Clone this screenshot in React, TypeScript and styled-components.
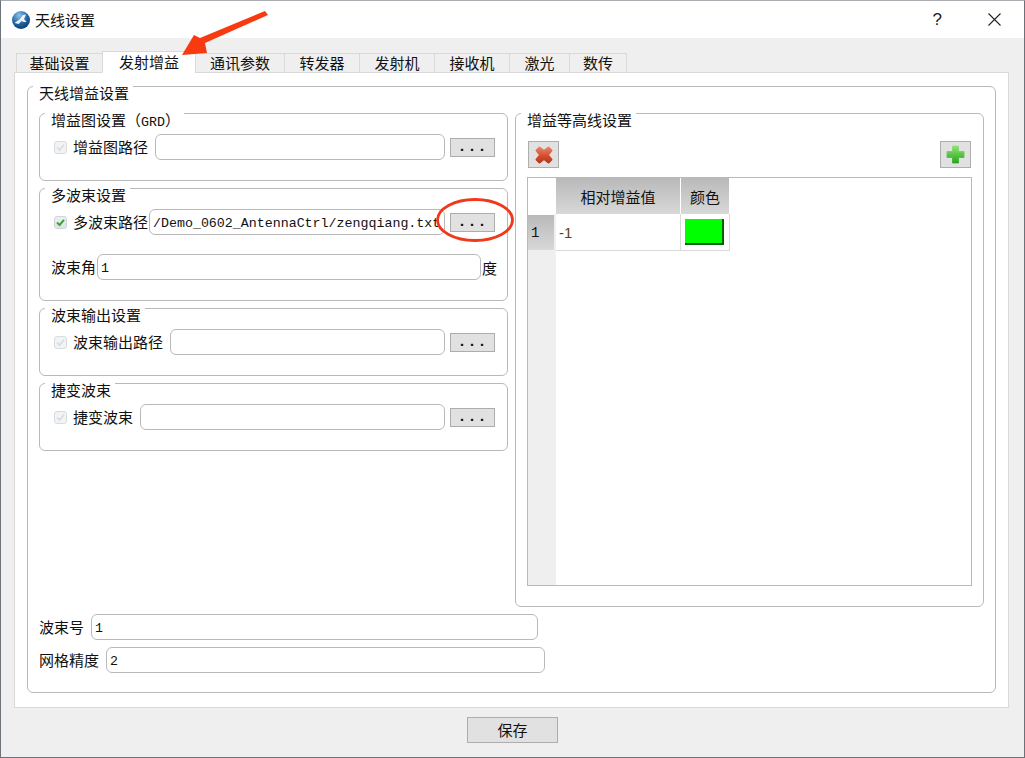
import React from "react";
import styled, { createGlobalStyle } from "styled-components";

const Global = createGlobalStyle`
  html, body { margin: 0; padding: 0; background: #efefef; }
  * { box-sizing: border-box; }
  body { font-family: "Noto Sans CJK SC", "Liberation Sans", sans-serif; font-size: 15px; color: #111; }
`;
const Win = styled.div`
  position: relative; width: 1025px; height: 758px; display: flex; flex-direction: column;
  background: #efefef; border: 1px solid #6d7278; border-top-color: #a9adb1; overflow: hidden;
`;
const TitleBar = styled.div`
  height: 37px; flex: none; background: #fff; display: flex; align-items: center; padding: 0 23px 0 10px;
`;
const TitleText = styled.span`
  margin-left: 4px; font-size: 15px; line-height: 20px; flex: 1;
`;
const Help = styled.span`
  font-family: "Liberation Sans", sans-serif; font-size: 17px; margin-right: 46px; color: #222;
`;
const Body = styled.div`
  flex: 1; display: flex; flex-direction: column; padding: 13px 15px 0 13px;
`;
const TabBar = styled.div`
  height: 22px; flex: none; display: flex; align-items: flex-end; padding-left: 2px; position: relative; z-index: 1; margin-bottom: -1px;
`;
const Tab = styled.div<{ $w: number; $active?: boolean }>`
  width: ${(p) => p.$w}px; height: ${(p) => (p.$active ? 22 : 20)}px;
  padding-bottom: 1px;
  display: flex; align-items: center; justify-content: center;
  font-size: 15px; line-height: 18px;
  background: ${(p) => (p.$active ? "#fff" : "#efefef")};
  border: 1px solid #d9d9d9;
  border-right-width: 0;
  border-bottom-color: ${(p) => (p.$active ? "#fff" : "#d9d9d9")};
  &:last-child { border-right-width: 1px; }
`;
const Pane = styled.div`
  height: 636px; flex: none; background: #fff; border: 1px solid #d9d9d9; padding: 13px 12px 13px 12px;
`;
const Group = styled.div<{ $h: number }>`
  position: relative; height: ${(p) => p.$h}px; border: 1px solid #b9b9b9; border-radius: 6px; background: #fff;
`;
const Legend = styled.span`
  position: absolute; left: 5px; top: -2px; padding: 0 4px 0 6px; background: #fff;
  font-size: 15px; line-height: 16px; white-space: nowrap; color: #111;
`;
const LegendLatin = styled.span`
  font-family: "Liberation Mono", monospace; font-size: 13.3px;
`;
const Outer = styled(Group)`
  padding: 26px 11px 0;
`;
const Columns = styled.div`
  display: flex; gap: 7px;
`;
const LeftCol = styled.div`
  width: 469px; display: flex; flex-direction: column; gap: 7px;
`;
const Sub = styled(Group)`
  padding: 20px 12px 0 14px; display: flex; flex-direction: column; gap: 19px;
`;
const Row = styled.div`
  display: flex; align-items: center; height: 26px;
`;
const Check = styled.span<{ $off?: boolean }>`
  width: 13px; height: 13px; flex: none; border-radius: 3px; margin-right: 6px;
  border: 1px solid ${(p) => (p.$off ? "#d8dce0" : "#cfd4d9")};
  background: ${(p) => (p.$off ? "#f1f3f5" : "linear-gradient(#eceff2, #dfe3e7)")};
  display: flex; align-items: center; justify-content: center;
  svg { display: block; }
`;
const FieldLabel = styled.span<{ $shift?: number }>`
  font-size: 15px; line-height: 18px; white-space: nowrap; flex: none; margin-left: ${(p) => p.$shift ?? 0}px;
`;
const Input = styled.div<{ $ml?: number; $w?: number }>`
  flex: ${(p) => (p.$w ? "none" : "1")}; ${(p) => (p.$w ? `width:${p.$w}px;` : "")}
  min-width: 0; height: 26px; margin-left: ${(p) => p.$ml ?? 1}px;
  border: 1px solid #b9b9b9; border-radius: 6px; background: #fff; overflow: hidden;
  padding-left: 3px;
  font-family: "Liberation Mono", monospace; font-size: 13.3px; line-height: 28px; white-space: nowrap; color: #111;
`;
const DotsButton = styled.div`
  width: 45px; height: 19px; flex: none; margin-left: 5px; background: #e1e1e1; border: 1px solid #adadad;
  font-family: "Liberation Mono", monospace; font-size: 15px; font-weight: 700; line-height: 17px; text-align: center; letter-spacing: 1px;
`;
const Unit = styled.span`
  font-size: 15px; margin-left: 1px; margin-right: -2px; flex: none;
`;
const RightGroup = styled(Group)`
  width: 469px; padding: 27px 12px 0 12px; display: flex; flex-direction: column;
`;
const IconBar = styled.div`
  display: flex; justify-content: space-between; height: 36px; flex: none;
`;
const IconButton = styled.div`
  width: 31px; height: 27px; background: #e1e1e1; border: 1px solid #adadad;
  display: flex; align-items: center; justify-content: center;
`;
const TableFrame = styled.div`
  width: 445px; height: 409px; margin-left: -1px; border: 1px solid #b9b9b9; background: #fff; display: flex;
`;
const RowHeadCol = styled.div`
  width: 28px; flex: none; display: flex; flex-direction: column; background: #efefef;
`;
const Corner = styled.div`
  height: 36px; flex: none; background: #fff;
`;
const RowHead = styled.div`
  height: 36px; flex: none; width: 26px; padding-left: 3px; background: linear-gradient(#b9b9b9, #d8d8d8);
  border-top: 1px solid #fff;
  font-family: "Liberation Mono", monospace; font-size: 14px; line-height: 37px;
`;
const DataCols = styled.div`
  display: flex; flex-direction: column;
`;
const HeadRow = styled.div`
  display: flex; height: 36px; gap: 1px;
`;
const HeadCell = styled.div<{ $w: number }>`
  width: ${(p) => p.$w}px; display: flex; align-items: center; justify-content: center;
  background: linear-gradient(#b9b9b9, #d8d8d8); font-size: 15px;
`;
const BodyRow = styled.div`
  display: flex; height: 37px; border-bottom: 1px solid #d9d9d9;
`;
const ValueCell = styled.div`
  width: 125px; padding-left: 3px; font-family: "Liberation Sans", sans-serif; font-size: 15px; line-height: 38px; border-right: 1px solid #d9d9d9; color: #6b3d00;
`;
const ColorCell = styled.div`
  width: 49px; border-right: 1px solid #d9d9d9; padding: 5px 4px 0 4px;
`;
const Swatch = styled.div`
  width: 39px; height: 26px; background: #00ff00; border-style: solid; border-color: #056005; border-width: 0 2px 2px 0;
`;
const BottomRow = styled.div`
  display: flex; align-items: center; height: 26px; margin-top: 7px;
`;
const BottomLabel = styled.span`
  font-size: 15px; line-height: 18px; flex: none; margin-right: 7px;
`;
const Footer = styled.div`
  flex: 1; display: flex; justify-content: center; align-items: flex-start; padding: 9px 0 0 0;
`;
const SaveButton = styled.div`
  width: 91px; height: 26px; margin-left: 2px; background: #e1e1e1; border: 1px solid #adadad; text-align: center; font-size: 15px; line-height: 24px;
`;
const Annotation = styled.svg`
  position: absolute; left: -1px; top: -1px; width: 1025px; height: 758px; pointer-events: none; z-index: 5;
`;

const CheckMark = () => (
  <svg width="11" height="11" viewBox="0 0 11 11">
    <path d="M2 5.5 L4.6 8 L9 2.8" fill="none" stroke="#3aa335" strokeWidth="2" />
  </svg>
);
const CheckFaint = () => (
  <svg width="11" height="11" viewBox="0 0 11 11">
    <path d="M2 5.5 L4.6 8 L9 2.8" fill="none" stroke="#d6dbdf" strokeWidth="1.6" />
  </svg>
);
const RedX = () => (
  <svg width="18" height="18" viewBox="0 0 18 18">
    <defs>
      <linearGradient id="rx" x1="0" y1="0" x2="0" y2="1">
        <stop offset="0" stopColor="#e8806a" />
        <stop offset="0.6" stopColor="#d4492c" />
        <stop offset="1" stopColor="#b43a1e" />
      </linearGradient>
    </defs>
    <path d="M1.5 4.5 L4.5 1.5 L9 5 L13.5 1.5 L16.5 4.5 L13 9 L16.5 13.5 L13.5 16.5 L9 13 L4.5 16.5 L1.5 13.5 L5 9 Z" fill="url(#rx)" stroke="url(#rx)" strokeWidth="2" strokeLinejoin="round" />
  </svg>
);
const GreenPlus = () => (
  <svg width="19" height="19" viewBox="0 0 19 19">
    <defs>
      <linearGradient id="gp" x1="0" y1="0" x2="0" y2="1">
        <stop offset="0" stopColor="#8ce476" />
        <stop offset="1" stopColor="#2aa51b" />
      </linearGradient>
    </defs>
    <path d="M6.5 1 H12.5 V6.5 H18 V12.5 H12.5 V18 H6.5 V12.5 H1 V6.5 H6.5 Z" fill="url(#gp)" stroke="url(#gp)" strokeWidth="0.8" strokeLinejoin="round" />
  </svg>
);
const Globe = () => (
  <svg width="20" height="20" viewBox="0 0 20 20">
    <defs>
      <radialGradient id="gl" cx="0.4" cy="0.25" r="0.85">
        <stop offset="0" stopColor="#8cc0e8" />
        <stop offset="0.55" stopColor="#1f66a6" />
        <stop offset="1" stopColor="#0c2f58" />
      </radialGradient>
    </defs>
    <circle cx="10" cy="10" r="9" fill="url(#gl)" />
    <path d="M3.5 13 L8.5 9.5 L12 5 L15 4.5 L13 9 L15.5 12 L13 12 L10.5 11 L7.5 14 L6 13.5 Z" fill="#eef3f8" />
  </svg>
);
const Close = () => (
  <svg width="13" height="13" viewBox="0 0 13 13">
    <path d="M0.5 0.5 L12.5 12.5 M12.5 0.5 L0.5 12.5" stroke="#222" strokeWidth="1.1" fill="none" />
  </svg>
);

const tabs: [string, number][] = [
  ["基础设置", 86], ["发射增益", 93], ["通讯参数", 89], ["转发器", 75], ["发射机", 75], ["接收机", 75], ["激光", 60], ["数传", 58],
];

export default function App() {
  return (
    <Win>
      <Global />
      <TitleBar>
        <Globe />
        <TitleText>天线设置</TitleText>
        <Help>?</Help>
        <Close />
      </TitleBar>
      <Body>
        <TabBar>
          {tabs.map(([t, w], i) => (
            <Tab key={t} $w={w} $active={i === 1}>{t}</Tab>
          ))}
        </TabBar>
        <Pane>
          <Outer $h={607}>
            <Legend>天线增益设置</Legend>
            <Columns>
              <LeftCol>
                <Sub $h={68}>
                  <Legend>增益图设置（<LegendLatin>GRD</LegendLatin>）</Legend>
                  <Row>
                    <Check $off><CheckFaint /></Check>
                    <FieldLabel>增益图路径</FieldLabel>
                    <Input $ml={7} />
                    <DotsButton>...</DotsButton>
                  </Row>
                </Sub>
                <Sub $h={113}>
                  <Legend>多波束设置</Legend>
                  <Row>
                    <Check><CheckMark /></Check>
                    <FieldLabel>多波束路径</FieldLabel>
                    <Input>/Demo_0602_AntennaCtrl/zengqiang.txt</Input>
                    <DotsButton>...</DotsButton>
                  </Row>
                  <Row>
                    <FieldLabel $shift={-3}>波束角</FieldLabel>
                    <Input>1</Input>
                    <Unit>度</Unit>
                  </Row>
                </Sub>
                <Sub $h={68}>
                  <Legend>波束输出设置</Legend>
                  <Row>
                    <Check $off><CheckFaint /></Check>
                    <FieldLabel>波束输出路径</FieldLabel>
                    <Input $ml={7} />
                    <DotsButton>...</DotsButton>
                  </Row>
                </Sub>
                <Sub $h={68}>
                  <Legend>捷变波束</Legend>
                  <Row>
                    <Check $off><CheckFaint /></Check>
                    <FieldLabel>捷变波束</FieldLabel>
                    <Input $ml={7} />
                    <DotsButton>...</DotsButton>
                  </Row>
                </Sub>
              </LeftCol>
              <RightGroup $h={494}>
                <Legend>增益等高线设置</Legend>
                <IconBar>
                  <IconButton><RedX /></IconButton>
                  <IconButton><GreenPlus /></IconButton>
                </IconBar>
                <TableFrame>
                  <RowHeadCol>
                    <Corner />
                    <RowHead>1</RowHead>
                  </RowHeadCol>
                  <DataCols>
                    <HeadRow>
                      <HeadCell $w={124}>相对增益值</HeadCell>
                      <HeadCell $w={48}>颜色</HeadCell>
                    </HeadRow>
                    <BodyRow>
                      <ValueCell>-1</ValueCell>
                      <ColorCell><Swatch /></ColorCell>
                    </BodyRow>
                  </DataCols>
                </TableFrame>
              </RightGroup>
            </Columns>
            <BottomRow>
              <BottomLabel>波束号</BottomLabel>
              <Input $w={447} $ml={0}>1</Input>
            </BottomRow>
            <BottomRow>
              <BottomLabel>网格精度</BottomLabel>
              <Input $w={439} $ml={0}>2</Input>
            </BottomRow>
          </Outer>
        </Pane>
        <Footer>
          <SaveButton>保存</SaveButton>
        </Footer>
      </Body>
      <Annotation viewBox="0 0 1025 758">
        <polygon points="265,11 268,15 205,43 207,53 182,55 194,35 200,38" fill="#f83a10" />
        <ellipse cx="475" cy="220" rx="37.5" ry="20.5" fill="none" stroke="#f0381a" strokeWidth="2.8" />
      </Annotation>
    </Win>
  );
}
